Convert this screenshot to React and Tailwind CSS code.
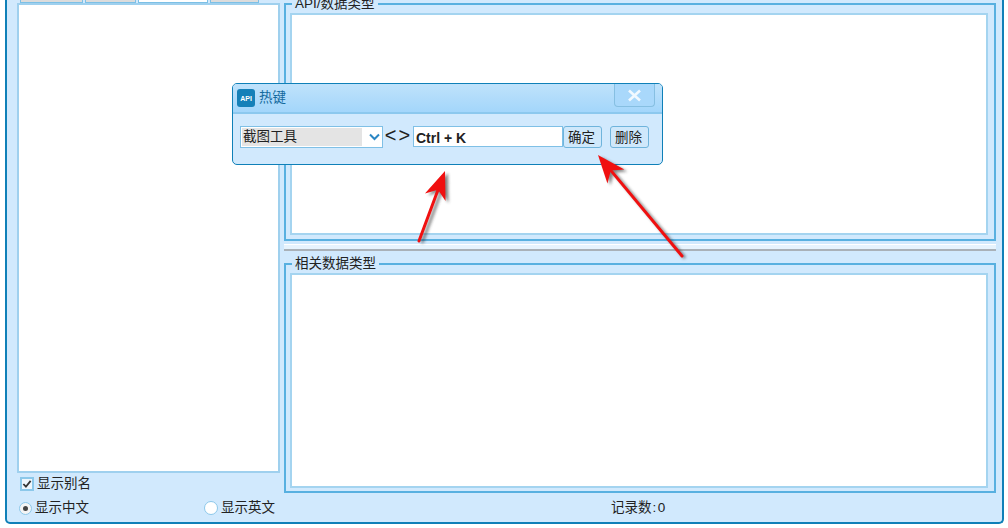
const FONT = { fontFamily: '"Liberation Sans","Noto Sans CJK SC",sans-serif' };

function Tab({ w, active }) {
  return (
    <div
      style={{ width: w }}
      className={`h-[3px] border-x border-b border-[#7cc0e6] ${active ? "bg-white" : "bg-[#dcdcdc]"}`}
    />
  );
}

function Group({ title, className, boxClass }) {
  return (
    <div className={`relative shrink-0 border-2 border-[#58b0e0] ${className}`}>
      <span className="absolute left-[6px] top-[-9px] h-[16px] bg-[#d1e9fd] px-[3px] text-[13.5px] leading-[16px] text-[#222]">
        {title}
      </span>
      <div className={`bg-white border-2 border-[#a4d4f0] ${boxClass}`} />
    </div>
  );
}

function Arrow({ x1, y1, x2, y2 }) {
  const a = Math.atan2(y2 - y1, x2 - x1);
  const L = 28, W = 11, N = 20;
  const ux = Math.cos(a), uy = Math.sin(a);
  const px = -uy, py = ux;
  const pts = [
    [x2, y2],
    [x2 - L * ux + W * px, y2 - L * uy + W * py],
    [x2 - N * ux, y2 - N * uy],
    [x2 - L * ux - W * px, y2 - L * uy - W * py],
  ].map((p) => p.join(",")).join(" ");
  return (
    <g>
      <g transform="translate(3,2)" opacity="0.6" fill="#333" stroke="#333" filter="url(#blur)">
        <line x1={x1} y1={y1} x2={x2 - N * ux} y2={y2 - N * uy} strokeWidth="3" />
        <polygon points={pts} stroke="none" />
      </g>
      <line x1={x1} y1={y1} x2={x2 - N * ux} y2={y2 - N * uy} stroke="#f01010" strokeWidth="3" strokeLinecap="round" />
      <polygon points={pts} fill="#f01010" />
    </g>
  );
}

export default function App() {
  return (
    <div style={FONT} className="relative h-[528px] w-[1008px] overflow-hidden bg-white">
      <div className="flex h-[524px] w-[999px] ml-[5px] flex-col rounded-b-[5px] border-x-2 border-b-2 border-[#0f80b8] bg-[#d1e9fd] pl-[10px] pr-[5px]">
        <div className="flex h-[494px] shrink-0">
          <div className="flex w-[263px] shrink-0 flex-col">
            <div className="flex h-[3px] shrink-0 gap-[2px] pl-[3px]">
              <Tab w={63} />
              <Tab w={51} />
              <Tab w={70} active />
              <Tab w={49} />
            </div>
            <div className="h-[470px] shrink-0 border-2 border-[#9fd0ee] bg-white" />
            <label className="mt-[1px] flex h-[20px] shrink-0 items-center pl-[3px] text-[13.5px] text-[#222]">
              <span className="flex h-[14px] w-[14px] items-center justify-center border-2 border-[#8cc8ea] bg-[#eef6fc]">
                <svg width="11" height="10" viewBox="0 0 11 10">
                  <path d="M1.5 5 L4.3 8 L9.5 1.5" fill="none" stroke="#333" strokeWidth="2" />
                </svg>
              </span>
              <span className="ml-[3px]">显示别名</span>
            </label>
          </div>
          <div className="ml-[4px] flex w-[712px] shrink-0 flex-col">
            <Group title="API/数据类型" className="mt-[3px] h-[238px] pl-[4px] pr-[6px] pt-[8px]" boxClass="h-[222px]" />
            <div className="mt-[3px] h-[7px] shrink-0 border-b-2 border-t border-[#a9b1b8] border-t-white bg-[#e6f3fd]" />
            <Group title="相关数据类型" className="mt-[12px] h-[230px] pl-[4px] pr-[6px] pt-[8px]" boxClass="h-[215px]" />
          </div>
        </div>
        <div className="flex h-[28px] shrink-0 items-center text-[13.5px] text-[#222]">
          <span className="flex w-[187px] items-center pl-[2px]">
            <span className="flex h-[13px] w-[13px] items-center justify-center rounded-full border border-[#8cc8ea] bg-[#f4f4f4]">
              <span className="h-[5px] w-[5px] rounded-full bg-[#444]" />
            </span>
            <span className="ml-[3px]">显示中文</span>
          </span>
          <span className="flex w-[407px] items-center">
            <span className="h-[14px] w-[14px] rounded-full border border-[#8cc8ea] bg-white" />
            <span className="ml-[3px]">显示英文</span>
          </span>
          <span>记录数<span className="ml-[1px] tracking-[1.5px]">:0</span></span>
        </div>
      </div>

      <div className="absolute left-[232px] top-[83px] flex h-[82px] w-[431px] flex-col rounded-[5px] border border-[#0f80b8] bg-[#d1e9fd]">
        <div className="relative flex h-[30px] items-center rounded-t-[4px] border-b-2 border-[#8cc8ee] bg-gradient-to-b from-[#bfe2fb] to-[#a3d6fb] pl-[4px]">
          <span className="flex h-[18px] w-[18px] items-center justify-center rounded-[3px] bg-[#1580b8] text-[7px] font-bold leading-none text-white">
            API
          </span>
          <span className="ml-[4px] text-[13.5px] text-[#146a9e]">热键</span>
          <span className="absolute right-[7px] top-0 flex h-[23px] w-[41px] items-center justify-center rounded-b-[4px] border border-t-0 border-[#86bfe2] bg-[#a9d8fb]">
            <svg width="15" height="13" viewBox="0 0 15 13">
              <path d="M2 1.5 L13 11.5 M13 1.5 L2 11.5" stroke="#f2f9ff" strokeWidth="2.6" />
            </svg>
          </span>
        </div>
        <div className="flex items-start pl-[7px] pt-[12px]">
          <div className="relative flex h-[22px] w-[143px] items-center border border-[#7fc0e6] bg-white p-[1px]">
            <span className="flex h-full w-[120px] items-center bg-[#e4e4e4] pl-[1px] pt-[1px] text-[13.5px] text-[#222]">截图工具</span>
            <svg className="ml-[7px]" width="11" height="8" viewBox="0 0 11 8">
              <path d="M1 1.5 L5.5 6 L10 1.5" fill="none" stroke="#2a86c4" strokeWidth="2" />
            </svg>
          </div>
          <span className="mt-[-1px] ml-[1px] w-[29px] text-center text-[20px] leading-[20px] tracking-[2px] text-[#222]">&lt;&gt;</span>
          <div className="flex h-[21px] w-[150px] items-center border border-[#7fc0e6] bg-white pl-[2px] pt-[4px] text-[14px] font-bold text-[#222]">
            Ctrl + K
          </div>
          <button className="h-[22px] w-[39px] rounded-[3px] border border-[#6fb4dc] bg-[#cfe8fb] pr-[2px] pt-[2px] text-[13.5px] leading-none text-[#222]">确定</button>
          <button className="ml-[8px] h-[22px] w-[39px] rounded-[3px] border border-[#6fb4dc] bg-[#cfe8fb] pr-[2px] pt-[2px] text-[13.5px] leading-none text-[#222]">删除</button>
        </div>
      </div>

      <svg className="absolute left-0 top-0" width="1008" height="528">
        <defs>
          <filter id="blur"><feGaussianBlur stdDeviation="1.6" /></filter>
        </defs>
        <Arrow x1={419} y1={241} x2={445} y2={171} />
        <Arrow x1={682} y1={256} x2={598} y2={155} />
      </svg>
    </div>
  );
}
